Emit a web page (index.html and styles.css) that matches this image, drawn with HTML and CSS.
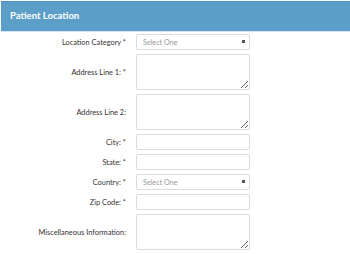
FILE: index.html
```html
<!DOCTYPE html>
<html lang="en">
<head>
    <meta charset="UTF-8">
    <meta name="viewport" content="width=device-width, initial-scale=1.0">
    <title>Patient Location</title>
    <link rel="stylesheet" href="styles.css">
</head>
<body>
    <div class="panel">
        <div class="panel-heading">Patient Location</div>

        <form class="panel-body">
            <div class="form-row">
                <label for="category">Location Category *</label>
                <div class="select">
                    <select id="category">
                        <option>Select One</option>
                    </select>
                    <span class="caret"></span>
                </div>
            </div>

            <div class="form-row">
                <label for="address1">Address Line 1: *</label>
                <textarea id="address1"></textarea>
            </div>

            <div class="form-row">
                <label for="address2">Address Line 2:</label>
                <textarea id="address2"></textarea>
            </div>

            <div class="form-row">
                <label for="city">City: *</label>
                <input type="text" id="city">
            </div>

            <div class="form-row">
                <label for="state">State: *</label>
                <input type="text" id="state">
            </div>

            <div class="form-row">
                <label for="country">Country: *</label>
                <div class="select">
                    <select id="country">
                        <option>Select One</option>
                    </select>
                    <span class="caret"></span>
                </div>
            </div>

            <div class="form-row">
                <label for="zip">Zip Code: *</label>
                <input type="text" id="zip">
            </div>

            <div class="form-row">
                <label for="misc">Miscellaneous Information:</label>
                <textarea id="misc"></textarea>
            </div>
        </form>
    </div>
</body>
</html>
```

FILE: styles.css
```css
* {
    margin: 0;
    padding: 0;
    box-sizing: border-box;
}

body {
    font-family: Lato, 'Open Sans', sans-serif;
    background: white;
    color: #333;
}

.panel {
    padding: 1px 0 0 1px;
}

.panel-heading {
    height: 31px;
    background: #5b9fc9;
    border-top: 1px solid #4d90bd;
    border-bottom: 1px solid #d3e5f1;
    color: white;
    font-size: 9.5px;
    font-weight: bold;
    line-height: 27px;
    padding-left: 9px;
}

.panel-body {
    display: flex;
    flex-direction: column;
    gap: 4px;
    padding-top: 2px;
}

.form-row {
    display: grid;
    grid-template-columns: 125px 114px;
    column-gap: 10px;
    align-items: center;
}

label {
    text-align: right;
    font-size: 7.4px;
    color: #333;
}

input[type="text"], textarea, select {
    display: block;
    width: 100%;
    height: 16px;
    border: 1px solid #dcdcdc;
    border-radius: 2px;
    background: white;
    font-family: inherit;
    font-size: 7.2px;
}

textarea {
    height: 36px;
    resize: vertical;
}

.select {
    position: relative;
}

select {
    appearance: none;
    color: #999;
    padding-left: 6px;
}

.caret {
    position: absolute;
    right: 5px;
    top: 6px;
    width: 3px;
    height: 3px;
    background: #555;
}
```
